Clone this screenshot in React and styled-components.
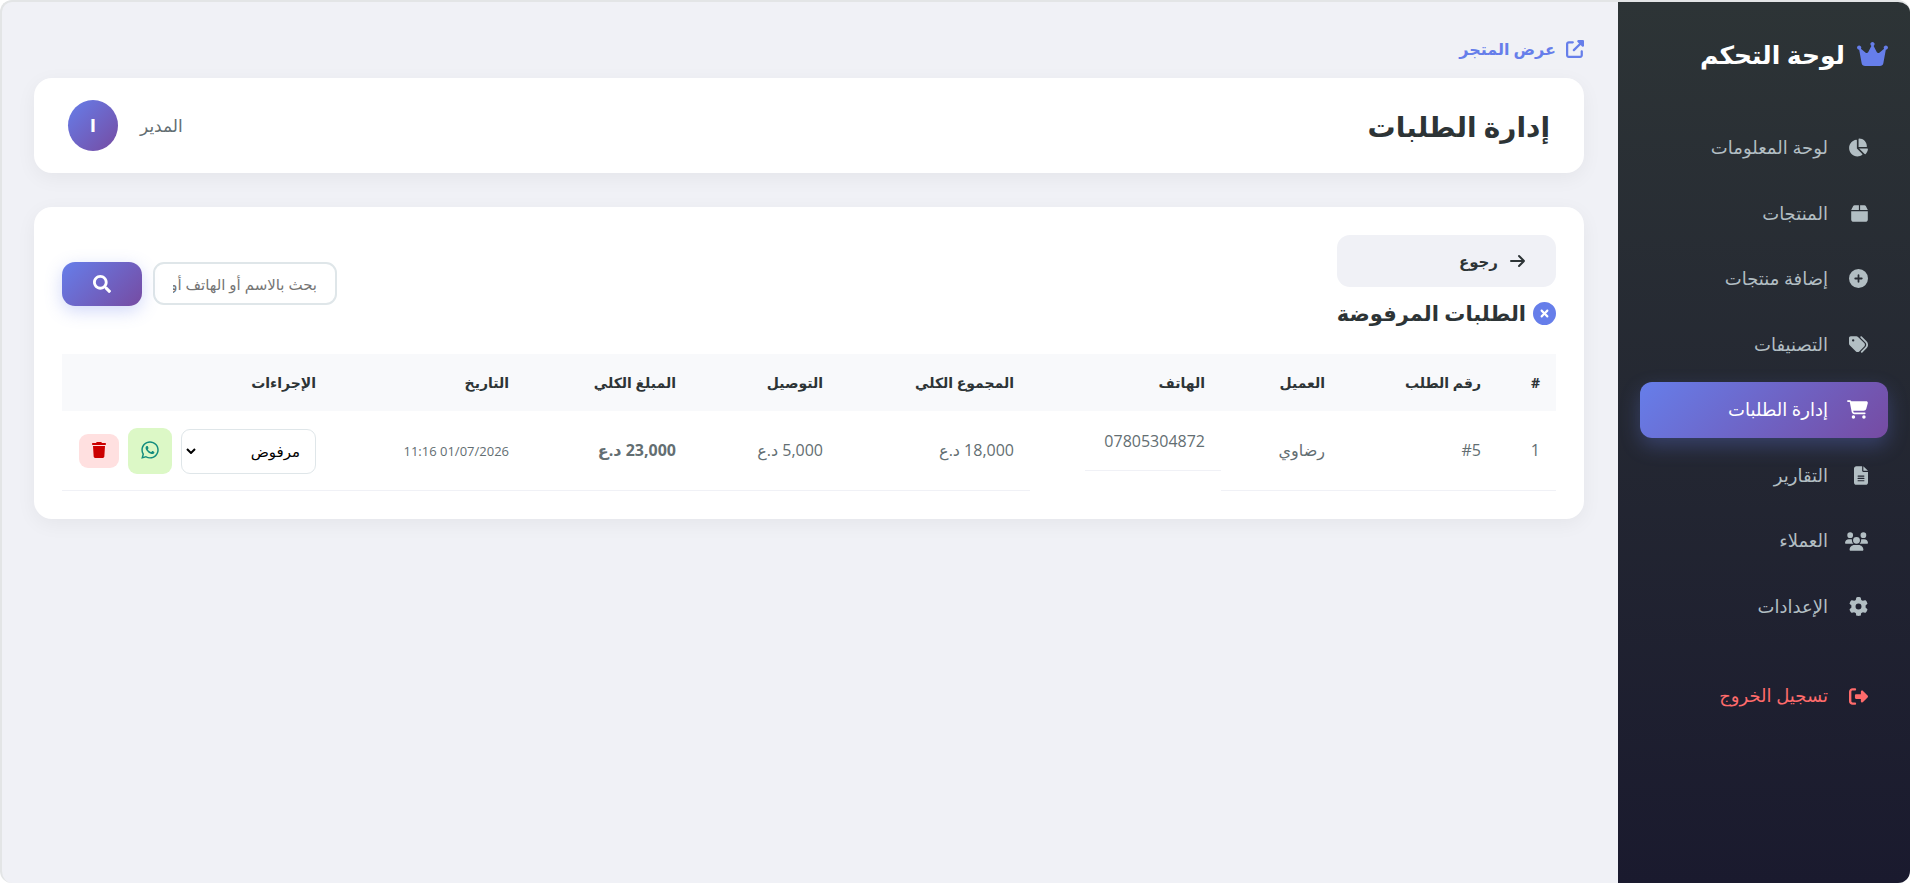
import React, { useState } from 'react';
import styled, { createGlobalStyle } from 'styled-components';
import { FaSearch } from 'react-icons/fa';
import {
   FaCrown,
   FaChartPie,
   FaBox,
   FaCirclePlus,
   FaTags,
   FaCartShopping,
   FaFileLines,
   FaUsers,
   FaGear,
   FaRightFromBracket,
   FaUpRightFromSquare,
   FaCircleXmark,
   FaWhatsapp,
   FaTrash,
} from 'react-icons/fa6';

const MENU = [
   { label: 'لوحة المعلومات', icon: FaChartPie, iconWidth: 20 },
   { label: 'المنتجات', icon: FaBox, iconWidth: 17 },
   { label: 'إضافة منتجات', icon: FaCirclePlus, iconWidth: 19 },
   { label: 'التصنيفات', icon: FaTags, iconWidth: 19 },
   { label: 'إدارة الطلبات', icon: FaCartShopping, iconWidth: 21, active: true },
   { label: 'التقارير', icon: FaFileLines, iconWidth: 14 },
   { label: 'العملاء', icon: FaUsers, iconWidth: 23 },
   { label: 'الإعدادات', icon: FaGear, iconWidth: 19 },
];

const COLUMNS = [
   { label: '#', width: 59 },
   { label: 'رقم الطلب', width: 156 },
   { label: 'العميل', width: 120 },
   { label: 'الهاتف', width: 191 },
   { label: 'المجموع الكلي', width: 191 },
   { label: 'التوصيل', width: 147 },
   { label: 'المبلغ الكلي', width: 167 },
   { label: 'التاريخ', width: 193 },
   { label: 'الإجراءات', width: 270 },
];

const ORDERS = [
   {
      id: 5,
      name: 'رضاوي',
      phone: '07805304872',
      subtotal: '18,000',
      delivery: '5,000',
      total: '23,000',
      date: '01/07/2026',
      time: '11:16',
      status: 'مرفوض',
   },
];

const STATUSES = ['قيد الانتظار', 'مقبول', 'مكتمل', 'مرفوض'];

const App = () => {
   const [orders, setOrders] = useState(ORDERS);
   const [search, setSearch] = useState('');

   const changeStatus = (id, status) => {
      setOrders(orders.map((order) => (order.id === id ? { ...order, status } : order)));
   };

   const removeOrder = (id) => {
      setOrders(orders.filter((order) => order.id !== id));
   };

   return (
      <>
         <GlobalStyle />
         <Page dir="rtl" lang="ar">
            <Sidebar>
               <Logo>
                  <FaCrown />
                  لوحة التحكم
               </Logo>
               <Menu>
                  {MENU.map((item) => (
                     <li key={item.label}>
                        <MenuLink href="#" $active={item.active}>
                           <MenuIcon $width={item.iconWidth}><item.icon /></MenuIcon>
                           {item.label}
                        </MenuLink>
                     </li>
                  ))}
                  <LogoutItem>
                     <MenuLink href="#" $danger>
                        <MenuIcon $width={19}><FaRightFromBracket /></MenuIcon>
                        تسجيل الخروج
                     </MenuLink>
                  </LogoutItem>
               </Menu>
            </Sidebar>

            <Main>
               <StoreLink href="#">
                  <FaUpRightFromSquare />
                  عرض المتجر
               </StoreLink>

               <TopBar>
                  <PageTitle>إدارة الطلبات</PageTitle>
                  <User>
                     <span>المدير</span>
                     <Avatar>ا</Avatar>
                  </User>
               </TopBar>

               <Card>
                  <CardHeader>
                     <div>
                        <BackLink href="#">
                           <svg viewBox="0 0 16 14">
                              <path d="M1 7h13M9 2l5 5-5 5" />
                           </svg>
                           رجوع
                        </BackLink>
                        <CardTitle>
                           <FaCircleXmark />
                           الطلبات المرفوضة
                        </CardTitle>
                     </div>
                     <SearchForm onSubmit={(e) => e.preventDefault()}>
                        <SearchInput
                           type="text"
                           aria-label="بحث"
                           placeholder="بحث بالاسم أو الهاتف أو رقم الطلب"
                           value={search}
                           onChange={(e) => setSearch(e.target.value)}
                        />
                        <SearchButton type="submit" aria-label="بحث">
                           <FaSearch />
                        </SearchButton>
                     </SearchForm>
                  </CardHeader>

                  <Table>
                     <thead>
                        <tr>
                           {COLUMNS.map((column) => (
                              <HeadCell key={column.label} $width={column.width}>
                                 {column.label}
                              </HeadCell>
                           ))}
                        </tr>
                     </thead>
                     <tbody>
                        {orders.map((order, index) => (
                           <tr key={order.id}>
                              <Cell>{index + 1}</Cell>
                              <Cell><bdi dir="ltr">#{order.id}</bdi></Cell>
                              <Cell>{order.name}</Cell>
                              <PhoneCell>
                                 <Phone>{order.phone}</Phone>
                              </PhoneCell>
                              <Cell>{order.subtotal} د.ع</Cell>
                              <Cell>{order.delivery} د.ع</Cell>
                              <Cell><strong>{order.total} د.ع</strong></Cell>
                              <DateCell>
                                 <bdi>{order.date}</bdi> <bdi>{order.time}</bdi>
                              </DateCell>
                              <Cell>
                                 <Actions>
                                    <SelectBox>
                                       <Select
                                          aria-label="حالة الطلب"
                                          value={order.status}
                                          onChange={(e) => changeStatus(order.id, e.target.value)}
                                       >
                                          {STATUSES.map((status) => (
                                             <option key={status}>{status}</option>
                                          ))}
                                       </Select>
                                       <svg viewBox="0 0 10 6">
                                          <path d="M1 1l4 4 4-4" fill="none" stroke="#000" strokeWidth="2" />
                                       </svg>
                                    </SelectBox>
                                    <WhatsappLink href="#" aria-label="واتساب">
                                       <FaWhatsapp />
                                    </WhatsappLink>
                                    <DeleteButton
                                       type="button"
                                       aria-label="حذف"
                                       onClick={() => removeOrder(order.id)}
                                    >
                                       <FaTrash />
                                    </DeleteButton>
                                 </Actions>
                              </Cell>
                           </tr>
                        ))}
                     </tbody>
                  </Table>
               </Card>
            </Main>
         </Page>
      </>
   );
};

const GlobalStyle = createGlobalStyle`
   * {
      box-sizing: border-box;
      margin: 0;
      padding: 0;
   }
   body {
      background: #fff;
      color: #2d3436;
      font-family: 'Open Sans', 'DejaVu Sans', sans-serif;
      font-size: 16px;
      line-height: 1.6;
   }
   a {
      text-decoration: none;
   }
   button, input, select {
      font-family: inherit;
   }
   svg {
      flex-shrink: 0;
   }
`;

const Page = styled.div`
   display: flex;
   min-height: 100vh;
   overflow: hidden;
   border: 2px solid #e3e5e6;
   border-right: none;
   border-bottom: none;
   border-radius: 12px;
   background: #f0f1f6;
`;

/*SIDEBAR*/
const Sidebar = styled.aside`
   flex: 0 0 292px;
   padding: 30px 22px;
   background: linear-gradient(180deg, #2d3436 0%, #1a1a2e 100%);
`;

const Logo = styled.div`
   display: flex;
   align-items: center;
   gap: 12px;
   margin-bottom: 44px;
   color: #fff;
   font-size: 25px;
   font-weight: 700;
   line-height: 44px;

   svg {
      width: 31px;
      height: 28px;
      color: #667eea;
   }
`;

const Menu = styled.ul`
   list-style: none;

   li {
      margin-bottom: 10px;
   }
`;

const LogoutItem = styled.li`
   padding-top: 24px;
`;

const MenuLink = styled.a`
   display: flex;
   align-items: center;
   gap: 16px;
   padding: 15px 20px;
   border-radius: 12px;
   color: ${(props) => (props.$danger ? '#ff6b6b' : props.$active ? '#fff' : '#b2bec3')};
   background: ${(props) => (props.$active ? 'linear-gradient(135deg, #667eea 0%, #764ba2 100%)' : 'none')};
   box-shadow: ${(props) => (props.$active ? '0 8px 20px rgba(102, 126, 234, 0.3)' : 'none')};
   font-size: 18px;
   line-height: 1.42;
`;

const MenuIcon = styled.span`
   display: flex;
   width: 24px;

   svg {
      width: ${(props) => props.$width}px;
      height: 19px;
   }
`;

/*MAIN*/
const Main = styled.main`
   flex: 1;
   min-width: 0;
   padding: 32px 34px 32px 32px;
`;

const StoreLink = styled.a`
   display: flex;
   align-items: center;
   gap: 10px;
   width: fit-content;
   margin-bottom: 14px;
   color: #667eea;
   font-size: 16px;
   font-weight: 600;
   line-height: 30px;

   svg {
      font-size: 18px;
   }
`;

const TopBar = styled.header`
   display: flex;
   align-items: center;
   justify-content: space-between;
   margin-bottom: 34px;
   padding: 22px 34px;
   border-radius: 18px;
   background: #fff;
   box-shadow: 0 5px 20px rgba(0, 0, 0, 0.05);
`;

const PageTitle = styled.h1`
   font-size: 28px;
   font-weight: 700;
   line-height: 48px;
`;

const User = styled.div`
   display: flex;
   align-items: center;
   gap: 22px;
   color: #636e72;
   font-size: 17px;
`;

const Avatar = styled.div`
   display: flex;
   align-items: center;
   justify-content: center;
   width: 50px;
   height: 51px;
   border-radius: 50%;
   background: linear-gradient(135deg, #667eea 0%, #764ba2 100%);
   color: #fff;
   font-weight: 700;
`;

const Card = styled.section`
   padding: 28px;
   border-radius: 18px;
   background: #fff;
   box-shadow: 0 5px 20px rgba(0, 0, 0, 0.05);
`;

const CardHeader = styled.div`
   display: flex;
   align-items: center;
   justify-content: space-between;
   margin-bottom: 22px;
`;

const BackLink = styled.a`
   display: flex;
   align-items: center;
   gap: 12px;
   height: 52px;
   margin-bottom: 8px;
   padding: 0 30px;
   border-radius: 13px;
   background: #f0f1f6;
   color: #2d3436;
   font-size: 15px;
   font-weight: 600;

   svg {
      width: 16px;
      height: 14px;
      fill: none;
      stroke: currentColor;
      stroke-width: 2;
      stroke-linecap: round;
      stroke-linejoin: round;
   }
`;

const CardTitle = styled.h2`
   display: flex;
   align-items: center;
   gap: 7px;
   font-size: 21px;
   font-weight: 700;
   line-height: 37px;

   svg {
      color: #667eea;
      font-size: 23px;
   }
`;

const SearchForm = styled.form`
   display: flex;
   align-items: center;
   gap: 11px;
`;

const SearchInput = styled.input`
   width: 184px;
   height: 43px;
   padding: 0 18px;
   border: 2px solid #dfe6e9;
   border-radius: 11px;
   font-size: 15px;

   &::placeholder {
      color: #757575;
   }
`;

const SearchButton = styled.button`
   display: flex;
   align-items: center;
   justify-content: center;
   width: 80px;
   height: 44px;
   border: none;
   border-radius: 13px;
   background: linear-gradient(135deg, #667eea 0%, #764ba2 100%);
   box-shadow: 0 5px 17px rgba(102, 126, 234, 0.3);
   color: #fff;
   font-size: 18px;
   cursor: pointer;
`;

/*TABLE*/
const Table = styled.table`
   width: 100%;
   border-collapse: collapse;
   table-layout: fixed;
`;

const HeadCell = styled.th`
   width: ${(props) => props.$width}px;
   height: 57px;
   padding: 2px 16px 0;
   background: #f8f9fb;
   font-size: 14px;
   font-weight: 700;
   text-align: right;
   white-space: nowrap;
`;

const Cell = styled.td`
   height: 79px;
   padding: 2px 16px 0;
   border-bottom: 1px solid #f0f1f6;
   color: #636e72;
   text-align: right;
   white-space: nowrap;
`;

const PhoneCell = styled(Cell)`
   padding: 0;
   border-bottom: none;
   vertical-align: top;
`;

const Phone = styled.div`
   width: 71%;
   height: 60px;
   padding: 0 16px;
   border-bottom: 1px solid #f0f1f6;
   line-height: 60px;
`;

const DateCell = styled(Cell)`
   font-size: 13px;
`;

const Actions = styled.div`
   display: flex;
   align-items: center;
   gap: 9px;
`;

const SelectBox = styled.div`
   display: grid;
   align-items: center;

   select, svg {
      grid-area: 1 / 1;
   }
   svg {
      justify-self: end;
      width: 10px;
      height: 6px;
      margin-left: 5px;
      pointer-events: none;
   }
`;

const Select = styled.select`
   width: 135px;
   height: 45px;
   padding: 0 15px;
   border: 1px solid #dfe6e9;
   border-radius: 9px;
   background: #fff;
   color: #000;
   font-size: 15px;
   appearance: none;
`;

const WhatsappLink = styled.a`
   display: flex;
   align-items: center;
   justify-content: center;
   width: 44px;
   height: 46px;
   padding-bottom: 2px;
   border-radius: 9px;
   background: #dcf8c6;
   color: #128c7e;
   font-size: 20px;
`;

const DeleteButton = styled.button`
   display: flex;
   align-items: center;
   justify-content: center;
   width: 40px;
   height: 34px;
   padding-bottom: 2px;
   border: none;
   border-radius: 9px;
   background: #ffe0e0;
   color: #cc0000;
   font-size: 16px;
   cursor: pointer;
`;

export default App;
